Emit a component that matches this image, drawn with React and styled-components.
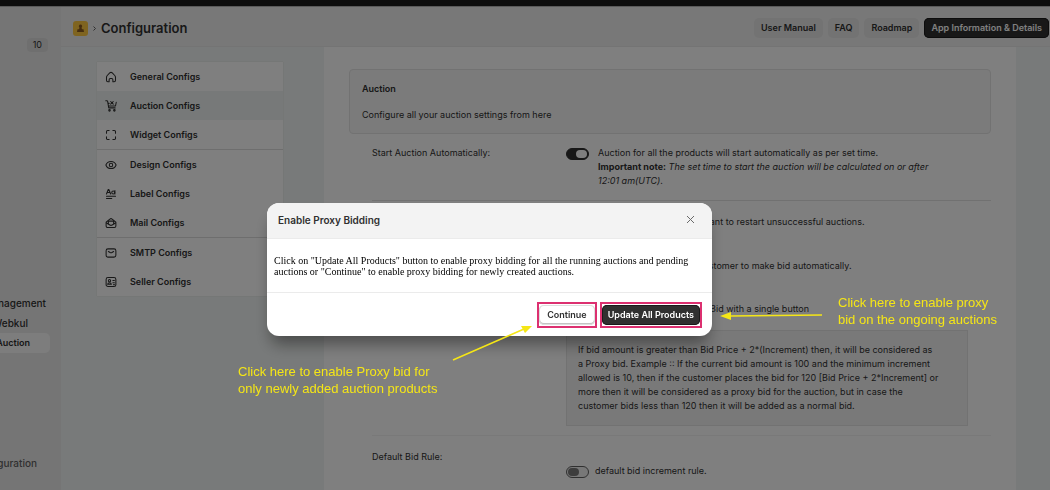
import React, { useState } from "react";
import styled, { createGlobalStyle, css } from "styled-components";

const GlobalStyle = createGlobalStyle`
  * {
    box-sizing: border-box;
  }
  body {
    margin: 0;
    background: #f1f5f4;
    color: #303030;
    font-family: Inter, "Liberation Sans", sans-serif;
    font-size: 9px;
    line-height: 14px;
  }
  h1,
  h2,
  p {
    margin: 0;
  }
  button,
  input {
    font: inherit;
    margin: 0;
  }
  a {
    color: inherit;
    text-decoration: none;
  }
`;

const Page = styled.div`
  position: relative;
  display: flex;
  flex-direction: column;
  min-height: 100vh;
  max-height: 100vh;
  overflow: hidden;
`;

const TopBar = styled.div`
  flex: none;
  height: 7px;
  background: #1a1a1a;
  border-bottom: 1px solid #b5b5b5;
`;

const Columns = styled.div`
  flex: 1;
  display: flex;
  min-height: 0;
`;

const Sidebar = styled.nav`
  flex: none;
  display: flex;
  flex-direction: column;
  width: 61px;
  padding: 31px 11px 17px 0;
  background: #ebebeb;
  overflow: hidden;
`;

const Count = styled.span`
  align-self: flex-end;
  margin-right: 2px;
  padding: 0 6px;
  border-radius: 4px;
  background: #dfdfdf;
`;

const SideLinks = styled.div`
  display: flex;
  flex-direction: column;
  margin-top: 241px;
`;

const SideLink = styled.a`
  display: flex;
  justify-content: flex-end;
  padding: 3px ${(props) => props.$end}px 3px 0;
  border-radius: 0 5px 5px 0;
  font-size: 10px;
  font-weight: 500;
  white-space: nowrap;
  ${(props) =>
    props.$active &&
    css`
      background: #fafafa;
      font-size: 9px;
      font-weight: 600;
    `}
  ${(props) =>
    props.$last &&
    css`
      margin-top: auto;
      color: #616161;
    `}
`;

const Main = styled.main`
  flex: 1;
  display: flex;
  flex-direction: column;
  min-width: 0;
`;

const Header = styled.header`
  flex: none;
  display: flex;
  align-items: center;
  gap: 5px;
  height: 40px;
  padding: 3px 1px 0 12px;
  background: #f1f1f1;
  border-bottom: 1px solid #e8e8e8;
`;

const Title = styled.h1`
  flex: 1;
  font-size: 13px;
  line-height: 20px;
  font-weight: 600;
`;

const HeaderButton = styled.button`
  height: 20px;
  padding: 0 7px;
  border: 0;
  border-radius: 5px;
  background: #e6e6e6;
  color: #303030;
  font-weight: 600;
  white-space: nowrap;
  ${(props) =>
    props.$primary &&
    css`
      background: #303030;
      color: #fff;
      box-shadow: inset 0 0 0 1px #1a1a1a;
    `}
`;

const Content = styled.div`
  flex: 1;
  display: flex;
  align-items: flex-start;
  gap: 41px;
  min-height: 0;
  padding: 0 34px 0 36px;
`;

const Menu = styled.nav`
  flex: none;
  width: 186px;
  margin-top: 15px;
  background: #fff;
  box-shadow: 0 0 1px #c8cccb;
`;

const MenuItem = styled.a`
  display: flex;
  align-items: center;
  gap: 13px;
  padding: 8px 8px 7px;
  font-weight: 600;
  background: ${(props) => (props.$active ? "#eff3f2" : "none")};
  ${(props) =>
    props.$divided &&
    css`
      border-bottom: 1px solid #dcdcdc;
    `}
  svg {
    flex: none;
    width: 12px;
    height: 12px;
  }
`;

const Panel = styled.section`
  flex: 1;
  align-self: stretch;
  padding: 22px 25px;
  background: #fff;
`;

const Intro = styled.div`
  display: flex;
  flex-direction: column;
  gap: 12px;
  padding: 12px 12px 11px;
  border: 1px solid #e4e4e4;
  border-radius: 4px;
  background: #f7f7f7;
`;

const Heading = styled.h2`
  font-size: ${(props) => (props.$large ? 10 : 9)}px;
  line-height: 14px;
  font-weight: 600;
`;

const Setting = styled.div`
  display: grid;
  grid-template-columns: 194px 1fr;
  margin-left: 23px;
  padding: ${(props) => props.$pad};
  ${(props) =>
    props.$divided &&
    css`
      border-bottom: 1px solid ${props.$faint ? "#f2f2f2" : "#e2e2e2"};
    `}
`;

const Control = styled.div`
  display: flex;
  align-items: flex-start;
  gap: ${(props) => props.$gap || 9}px;
  padding-top: ${(props) => props.$drop || 0}px;
`;

const Switch = styled.input.attrs({ type: "checkbox" })`
  appearance: none;
  flex: none;
  width: 23px;
  height: 12px;
  margin-top: 2px;
  padding: 1px;
  border: 1px solid #616161;
  border-radius: 6px;
  background: #f1f1f1;
  &::before {
    content: "";
    display: block;
    width: 11px;
    height: 8px;
    border-radius: 4px;
    background: #7a7a7a;
  }
  &:checked {
    border-color: #303030;
    background: #303030;
  }
  &:checked::before {
    margin-left: auto;
    background: #fff;
  }
`;

const Note = styled.p`
  grid-column: 2;
  margin: 14px 23px 9px 0;
  padding: 12px 11px;
  border: 1px solid #e4e4e4;
  background: #f3f3f3;
  white-space: nowrap;
`;

const Backdrop = styled.div`
  position: fixed;
  inset: 0;
  display: grid;
  place-items: center;
  padding: 49px 71px 0 0;
  background: rgba(0, 0, 0, 0.5);
`;

const Dialog = styled.div`
  width: 445px;
  max-width: 90%;
  border-radius: 12px;
  background: #fff;
  box-shadow: 0 12px 16px -4px rgba(0, 0, 0, 0.4);
  overflow: hidden;
`;

const DialogHead = styled.div`
  display: flex;
  align-items: center;
  justify-content: space-between;
  height: 36px;
  padding: 0 15px 2px 11px;
  background: #f3f3f3;
  border-bottom: 1px solid #ebebeb;
`;

const CloseButton = styled.button`
  display: flex;
  padding: 0;
  border: 0;
  background: none;
`;

const DialogText = styled.p`
  padding: 16px 7px 15px;
  border-bottom: 1px solid #ebebeb;
  color: #000;
  font-family: "Liberation Serif", serif;
  font-size: 10px;
  line-height: 11px;
`;

const DialogFoot = styled.div`
  display: flex;
  justify-content: flex-end;
  gap: 3px;
  padding: 9px 10px 8px;
`;

const Marked = styled.div`
  padding: 1px 0;
  border: 2px solid #dc3070;
`;

const DialogButton = styled.button`
  display: block;
  height: 20px;
  padding: 0 8px;
  border: 0;
  border-radius: 5px;
  background: #fff;
  box-shadow: inset 0 0 0 1px #dedede, inset 0 -1px 0 1px #c4c4c4;
  color: #303030;
  font-weight: 600;
  white-space: nowrap;
  ${(props) =>
    props.$primary &&
    css`
      padding: 0 6px;
      background: #303030;
      box-shadow: inset 0 0 0 1px #1a1a1a;
      color: #fff;
    `}
`;

const Arrows = styled.svg`
  position: fixed;
  top: 0;
  left: 0;
  width: 1050px;
  height: 490px;
  pointer-events: none;
`;

const Callout = styled.p`
  position: fixed;
  left: ${(props) => props.$x}px;
  top: ${(props) => props.$y}px;
  color: #f5e616;
  font-family: "Liberation Sans", sans-serif;
  font-size: 13px;
  line-height: 17px;
  white-space: nowrap;
`;

const icons = {
  home: (
    <path d="M8 1.800c-.7 0-1.200.3-1.700.8L3 6C2.300 6.800 2 7.600 2 8.500v3.800c0 1.100.7 1.900 1.800 1.900h1.700V11.500a1.500 1.500 0 0 1 1.500-1.500h2a1.500 1.500 0 0 1 1.500 1.500v2.700h1.700c1.100 0 1.800-.8 1.800-1.900V8.500c0-.9-.3-1.700-1-2.500L9.700 2.600C9.200 2.100 8.700 1.800 8 1.800Z" />
  ),
  cart: (
    <>
      <path d="M1 1h1.500c.6 0 .9.300 1 .9L5 10.500h8.500M4 4.500h1.500M15 3l-1 5H5" />
      <path d="m7.500 2 3.500 3.500M11 2 7.500 5.500" />
      <circle cx="6" cy="13.800" r="1" />
      <circle cx="12.500" cy="13.800" r="1" />
    </>
  ),
  widget: (
    <path d="M2 5.500V3.500A1.500 1.500 0 0 1 3.500 2h2M10.500 2h2A1.500 1.500 0 0 1 14 3.500v2M14 10.500v2a1.500 1.500 0 0 1-1.500 1.500h-2M5.500 14h-2A1.500 1.500 0 0 1 2 12.500v-2" />
  ),
  eye: (
    <>
      <path d="M1.200 8c1-2.700 3.700-4.700 6.800-4.700s5.800 2 6.800 4.700c-1 2.700-3.700 4.700-6.800 4.700S2.200 10.700 1.200 8Z" />
      <circle cx="8" cy="8" r="2.300" />
    </>
  ),
  label: (
    <>
      <path d="m2 8 2.300-6h.8L7.500 8M3 6h3.500M2 11h12M2 14h7" />
      <circle cx="11" cy="6" r="2" />
      <path d="M13.200 3.500V8" />
    </>
  ),
  mail: (
    <>
      <path d="M1.500 7 6.500 2.800a2.400 2.400 0 0 1 3 0L14.500 7v5a2 2 0 0 1-2 2h-9a2 2 0 0 1-2-2Z" />
      <path d="m2 8 4.500 2.700a3 3 0 0 0 3 0L14 8M4.500 8.500V5.500h7v3" />
    </>
  ),
  smtp: (
    <>
      <rect x="1.500" y="2.500" width="13" height="11" rx="2.500" />
      <path d="m4.500 6 2.300 1.400a2.500 2.500 0 0 0 2.400 0L11.500 6" />
    </>
  ),
  seller: (
    <>
      <rect x="1.500" y="2" width="13" height="12" rx="2.500" />
      <circle cx="6" cy="6.200" r="1.500" />
      <path d="M3.500 11c.2-1.300 1.200-2 2.500-2s2.300.7 2.500 2ZM10.500 6h2M10.500 9h2M11.500 11.500h1" />
    </>
  ),
};

function Icon({ name }) {
  return (
    <svg
      viewBox="0 0 16 16"
      fill="none"
      stroke="#303030"
      strokeWidth="1.400"
      strokeLinecap="round"
      strokeLinejoin="round"
      aria-hidden="true"
    >
      {icons[name]}
    </svg>
  );
}

const menu = [
  { label: "General Configs", icon: "home" },
  { label: "Auction Configs", icon: "cart", active: true },
  { label: "Widget Configs", icon: "widget", divided: true },
  { label: "Design Configs", icon: "eye" },
  { label: "Label Configs", icon: "label" },
  { label: "Mail Configs", icon: "mail", divided: true },
  { label: "SMTP Configs", icon: "smtp" },
  { label: "Seller Configs", icon: "seller" },
];

export default function App() {
  const [open, setOpen] = useState(true);
  const close = () => setOpen(false);

  return (
    <>
      <GlobalStyle />
      <Page>
        <TopBar />
        <Columns>
          <Sidebar>
            <Count>10</Count>
            <SideLinks>
              <SideLink href="#management" $end={4}>
                Management
              </SideLink>
              <SideLink href="#webkul" $end={22}>
                Webkul
              </SideLink>
              <SideLink href="#auction" $end={20} $active>
                Auction
              </SideLink>
            </SideLinks>
            <SideLink href="#configuration" $end={13} $last>
              Configuration
            </SideLink>
          </Sidebar>
          <Main>
            <Header>
              <svg width="15" height="15" viewBox="0 0 15 15" aria-hidden="true">
                <rect width="15" height="15" rx="3" fill="#ffc840" />
                <path
                  d="M7.500 3.500a1.800 1.800 0 0 1 1 3.200l.5 1.500h1.500L11 11H4l.500-2.800H6l.500-1.500a1.800 1.800 0 0 1 1-3.200Z"
                  fill="#8a5a20"
                />
              </svg>
              <svg width="3" height="7" viewBox="0 0 3 7" aria-hidden="true">
                <path d="m.5 1.500 2 2-2 2" fill="none" stroke="#616161" />
              </svg>
              <Title>Configuration</Title>
              <HeaderButton>User Manual</HeaderButton>
              <HeaderButton>FAQ</HeaderButton>
              <HeaderButton>Roadmap</HeaderButton>
              <HeaderButton $primary>App Information &amp; Details</HeaderButton>
            </Header>
            <Content>
              <Menu>
                {menu.map((item) => (
                  <MenuItem
                    key={item.label}
                    href="#"
                    $active={item.active}
                    $divided={item.divided}
                  >
                    <Icon name={item.icon} />
                    {item.label}
                  </MenuItem>
                ))}
              </Menu>
              <Panel>
                <Intro>
                  <Heading>Auction</Heading>
                  <p>Configure all your auction settings from here</p>
                </Intro>
                <Setting $pad="12px 0 12px" $divided>
                  <label htmlFor="start">Start Auction Automatically:</label>
                  <Control>
                    <Switch id="start" defaultChecked />
                    <p>
                      Auction for all the products will start automatically as
                      per set time.
                      <br />
                      <b>Important note:</b>{" "}
                      <i>
                        The set time to start the auction will be calculated on
                        or after
                        <br />
                        12:01 am(UTC).
                      </i>
                    </p>
                  </Control>
                </Setting>
                <Setting $pad="14px 0 15px">
                  <label htmlFor="restart">Restart Auction:</label>
                  <Control>
                    <Switch id="restart" />
                    <p>
                      Enable this option if you want to restart unsuccessful
                      auctions.
                    </p>
                  </Control>
                </Setting>
                <Setting $pad="15px 0 14px">
                  <label htmlFor="proxy">Proxy Bidding:</label>
                  <Control>
                    <Switch id="proxy" />
                    <p>
                      Enable this to allow the customer to make bid
                      automatically.
                    </p>
                  </Control>
                </Setting>
                <Setting $pad="15px 0 0" $divided $faint>
                  <label htmlFor="single">Single Button:</label>
                  <Control>
                    <Switch id="single" />
                    <p>Enable this to place Proxy Bid with a single button</p>
                  </Control>
                  <Note>
                    If bid amount is greater than Bid Price + 2*(Increment)
                    then, it will be considered as
                    <br />
                    a Proxy bid. Example :: If the current bid amount is 100 and
                    the minimum increment
                    <br />
                    allowed is 10, then if the customer places the bid for 120
                    [Bid Price + 2*Increment] or
                    <br />
                    more then it will be considered as a proxy bid for the
                    auction, but in case the
                    <br />
                    customer bids less than 120 then it will be added as a
                    normal bid.
                  </Note>
                </Setting>
                <Setting $pad="14px 0 0">
                  <label htmlFor="rule">Default Bid Rule:</label>
                  <Control $gap={6} $drop={14}>
                    <Switch id="rule" />
                    <p>default bid increment rule.</p>
                  </Control>
                </Setting>
              </Panel>
            </Content>
          </Main>
        </Columns>
      </Page>
      {open && (
        <Backdrop>
          <Dialog role="dialog" aria-labelledby="dialog-title">
            <DialogHead>
              <Heading id="dialog-title" $large>
                Enable Proxy Bidding
              </Heading>
              <CloseButton aria-label="Close" onClick={close}>
                <svg width="13" height="13" viewBox="0 0 13 13" aria-hidden="true">
                  <path d="m3 3 7 7M10 3l-7 7" stroke="#6a6a6a" />
                </svg>
              </CloseButton>
            </DialogHead>
            <DialogText>
              Click on "Update All Products" button to enable proxy bidding for
              all the running auctions and pending auctions or "Continue" to
              enable proxy bidding for newly created auctions.
            </DialogText>
            <DialogFoot>
              <Marked>
                <DialogButton onClick={close}>Continue</DialogButton>
              </Marked>
              <Marked>
                <DialogButton $primary onClick={close}>
                  Update All Products
                </DialogButton>
              </Marked>
            </DialogFoot>
          </Dialog>
          <Arrows aria-hidden="true" fill="#f5e616" stroke="#f5e616">
            <path d="M453 360 524 329M822 315 730 316" strokeWidth="1.500" />
            <path d="m532 326-7 7-4-7ZM720 316l11-4v8Z" stroke="none" />
          </Arrows>
          <Callout $x={238} $y={363}>
            Click here to enable Proxy bid for
            <br />
            only newly added auction products
          </Callout>
          <Callout $x={838} $y={294}>
            Click here to enable proxy
            <br />
            bid on the ongoing auctions
          </Callout>
        </Backdrop>
      )}
    </>
  );
}
